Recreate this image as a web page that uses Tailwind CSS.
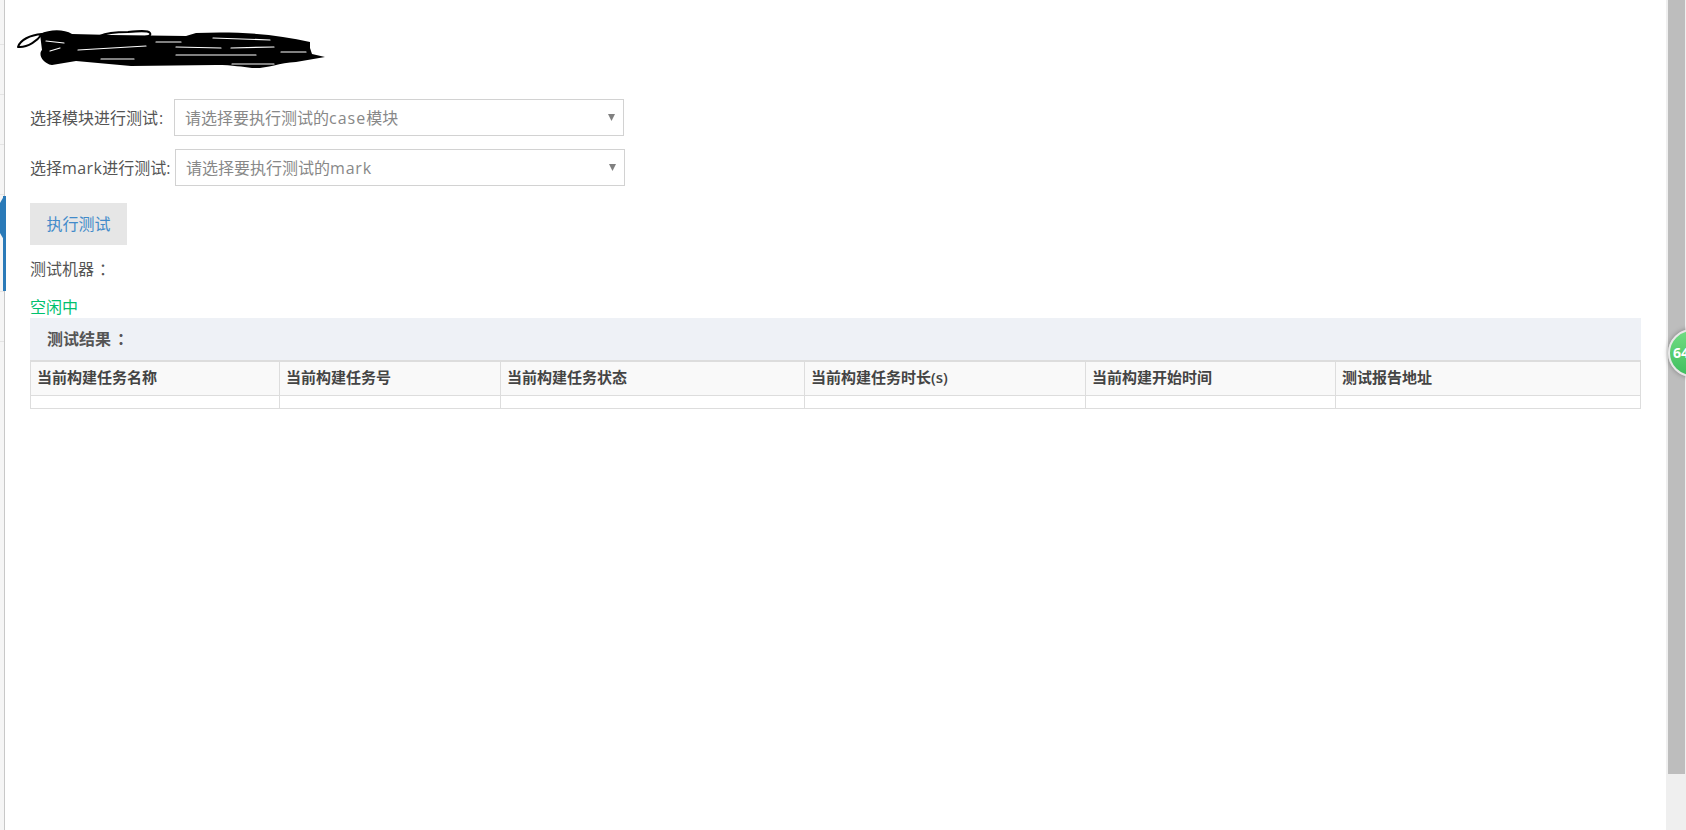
<!DOCTYPE html>
<html lang="zh-CN">
<head>
    <meta charset="UTF-8">
    <title>执行测试</title>
    <script src="https://cdn.jsdelivr.net/npm/@tailwindcss/browser@4"></script>
</head>
<body class="bg-white overflow-hidden font-['Open_Sans','Noto_Sans_CJK_SC',sans-serif] text-[#555] text-[16px]">
    <div class="relative flex h-[830px] w-[1686px] overflow-hidden">
        <!-- sidebar sliver -->
        <aside class="relative w-[5px] shrink-0 bg-[#f5f5f5] border-r border-[#c8c8c8]">
            <div class="h-[45px] border-b border-[#e4e4e4]"></div>
            <div class="h-[50px] border-b border-[#e4e4e4]"></div>
            <div class="h-[50px] border-b border-[#e4e4e4]"></div>
            <div class="h-[50px] border-b border-[#e4e4e4]"></div>
            <div class="h-[97px] border-b border-[#e4e4e4]"></div>
            <div class="h-[50px] border-b border-[#e4e4e4]"></div>
            <div class="absolute left-[3px] top-[196px] w-[3px] h-[95px] bg-[#2a7ab8]"></div>
            <svg class="absolute left-0 top-[196px]" width="4" height="50" viewBox="0 0 4 50"><path d="M4 0V44L0 37V7Z" fill="#2a7ab8"/></svg>
        </aside>

        <main class="flex-1 pl-[25px] pr-[25px]">
            <div class="relative h-[99px]">
                <svg class="absolute left-[-14px] top-[28px]" width="316" height="42" viewBox="0 0 316 42" fill="none" stroke-linecap="round" stroke-linejoin="round">
                    <path fill="#000" d="M24 6C34 1 48 1 56 6L96 7L170 8L180 5C220 3 260 6 294 14L294 20L296 26L309 29L280 34C262 35 250 41 236 40C226 39 218 37 200 37L115 38L60 33L36 37C26 35 22 26 26 22Z"/>
                    <g stroke="#000" stroke-width="2">
                        <path d="M2 19C4 12 14 7 26 6C22 12 12 20 2 19Z"/>
                        <path d="M84 8C90 5 100 4 112 4C122 3 132 2 134 5C136 8 130 9 124 10"/>
                    </g>
                    <g stroke="#fff" stroke-width="1.2">
                        <path d="M197 10L254 12M160 19L205 20M215 20L258 19M265 24L290 24M62 22L130 18M160 27L240 27M85 31L118 31"/>
                        <path d="M30 13L48 15M34 23L44 20M216 36L258 36M140 14L165 14"/>
                    </g>
                </svg>
            </div>

            <div class="flex items-center h-[37px]">
                <label class="w-[144px] shrink-0">选择模块进行测试<span class="ml-[1px]">:</span></label>
                <div class="relative flex items-center w-[450px] h-[37px] border border-[#d2d2d2] pl-[10px] text-[#888]">
                    <span>请选择要执行测试的<span class="tracking-[1px]">case</span>模块</span>
                    <svg class="absolute right-[8px] top-[14px]" width="7" height="7" viewBox="0 0 7 7"><path d="M0 0H7L3.5 7Z" fill="#808080"/></svg>
                </div>
            </div>
            <div class="flex items-center h-[37px] mt-[13px]">
                <label class="w-[145px] shrink-0">选择<span class="tracking-[0.4px]">mark</span>进行测试:</label>
                <div class="relative flex items-center w-[450px] h-[37px] border border-[#d2d2d2] pl-[10px] text-[#888]">
                    <span>请选择要执行测试的<span class="tracking-[0.8px]">mark</span></span>
                    <svg class="absolute right-[8px] top-[14px]" width="7" height="7" viewBox="0 0 7 7"><path d="M0 0H7L3.5 7Z" fill="#808080"/></svg>
                </div>
            </div>

            <button class="block mt-[17px] w-[97px] h-[42px] bg-[#e6e6e6] text-[#428bca]">执行测试</button>
            <p class="mt-[12px] h-[24px] leading-[24px]">测试机器<span class="ml-[5px]">：</span></p>
            <p class="mt-[14px] h-[24px] leading-[24px] text-[#00c16e]">空闲中</p>

            <div class="mt-[-1px] h-[43px] flex items-center pl-[17px] bg-[#eef1f6] border-b border-[#ddd] font-bold">测试结果<span class="ml-[6px]">：</span></div>
            <table class="table-fixed border-collapse w-[1610px] text-[15px] text-[#444]">
                <colgroup>
                    <col class="w-[249px]"><col class="w-[221px]"><col class="w-[304px]"><col class="w-[281px]"><col class="w-[250px]"><col class="w-[305px]">
                </colgroup>
                <thead>
                    <tr class="h-[34px] bg-[#f9f9f9]">
                        <th class="border border-[#ddd] pl-[6px] pb-[2px] text-left font-semibold">当前构建任务名称</th>
                        <th class="border border-[#ddd] pl-[6px] pb-[2px] text-left font-semibold">当前构建任务号</th>
                        <th class="border border-[#ddd] pl-[6px] pb-[2px] text-left font-semibold">当前构建任务状态</th>
                        <th class="border border-[#ddd] pl-[6px] pb-[2px] text-left font-semibold">当前构建任务时长(s)</th>
                        <th class="border border-[#ddd] pl-[6px] pb-[2px] text-left font-semibold">当前构建开始时间</th>
                        <th class="border border-[#ddd] pl-[6px] pb-[2px] text-left font-semibold">测试报告地址</th>
                    </tr>
                </thead>
                <tbody>
                    <tr class="h-[13px]">
                        <td class="border border-[#ddd]"></td><td class="border border-[#ddd]"></td><td class="border border-[#ddd]"></td><td class="border border-[#ddd]"></td><td class="border border-[#ddd]"></td><td class="border border-[#ddd]"></td>
                    </tr>
                </tbody>
            </table>
        </main>

        <!-- scrollbar -->
        <div class="w-[20px] shrink-0 bg-[#efefef] pl-[2px] pr-[1px]">
            <div class="h-[774px] bg-[#bdbdbd]"></div>
        </div>

        <!-- floating badge, cut by the window edge -->
        <div class="absolute left-[1668px] top-[329px] w-[48px] h-[48px] rounded-full border-[2px] border-[#e8e8e8] bg-gradient-to-b from-[#6fdc82] to-[#3fbf5f] shadow-[0_0_5px_rgba(0,0,0,0.35)] text-white font-bold text-[14px] leading-[44px] pl-[3px]">64</div>
    </div>
</body>
</html>
